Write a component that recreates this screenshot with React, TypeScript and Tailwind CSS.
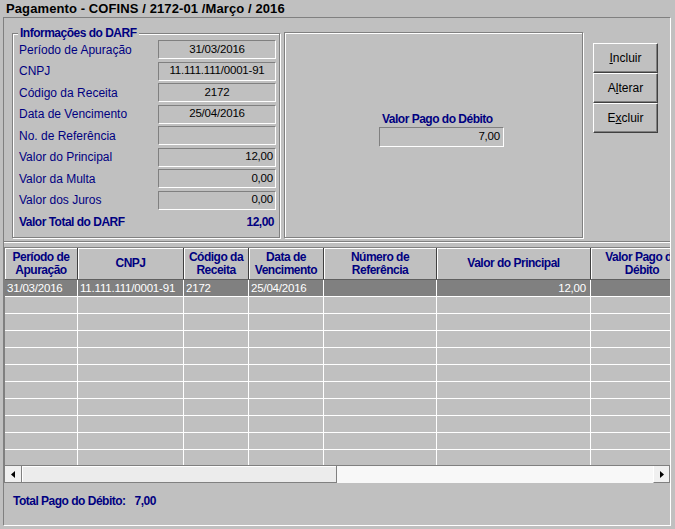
import React from "react";

const labels = [
  { label: "Período de Apuração", value: "31/03/2016", align: "center" },
  { label: "CNPJ", value: "11.111.111/0001-91", align: "center" },
  { label: "Código da Receita", value: "2172", align: "center" },
  { label: "Data de Vencimento", value: "25/04/2016", align: "center" },
  { label: "No. de Referência", value: "", align: "right" },
  { label: "Valor do Principal", value: "12,00", align: "right" },
  { label: "Valor da Multa", value: "0,00", align: "right" },
  { label: "Valor dos Juros", value: "0,00", align: "right" },
];

const cols = [
  { w: 73, head: ["Período de", "Apuração"] },
  { w: 106, head: ["CNPJ"] },
  { w: 65, head: ["Código da", "Receita"] },
  { w: 75, head: ["Data de", "Vencimento"] },
  { w: 113, head: ["Número de", "Referência"] },
  { w: 154, head: ["Valor do Principal"] },
  { w: 103, head: ["Valor Pago do", "Débito"] },
];

const firstRow = ["31/03/2016", "11.111.111/0001-91", "2172", "25/04/2016", "", "12,00", ""];

function Sunken({ children, className }: { children?: React.ReactNode; className: string }) {
  return (
    <div
      className={
        "flex items-center whitespace-nowrap bg-[#c0c0c0] border border-t-[#808080] border-l-[#808080] border-b-white border-r-white text-[11.5px] tracking-[-0.2px] text-black " +
        className
      }
    >
      {children}
    </div>
  );
}

function Button({ children }: { children: React.ReactNode }) {
  return (
    <div className="h-[30px] w-[65px] flex items-center justify-center border border-t-white border-l-white border-b-[#404040] border-r-[#404040] shadow-[inset_-1px_-1px_0_#808080] text-[12px] text-black">
      {children}
    </div>
  );
}

function Arrow({ dir }: { dir: "left" | "right" }) {
  return (
    <svg width="4" height="7" viewBox="0 0 4 7">
      {dir === "left" ? <polygon points="4,0 4,7 0,3.5" fill="#000" /> : <polygon points="0,0 0,7 4,3.5" fill="#000" />}
    </svg>
  );
}

export default function App() {
  return (
    <div className="w-[675px] h-[529px] bg-[#c0c0c0] overflow-hidden font-['Liberation_Sans',Arial,sans-serif]">
      <div className="h-[17px] pl-[6px] text-[13px] font-bold leading-[17px] tracking-[0.1px] text-black">
        Pagamento - COFINS / 2172-01 /Março / 2016
      </div>

      <div className="ml-[3px] w-[668px] h-[509px] border border-t-[#808080] border-l-[#808080] border-r-white border-b-white flex flex-col">
        {/* top section */}
        <div className="h-[224px] flex border-b border-[#808080] shadow-[0_1px_0_white] shrink-0">
          <fieldset className="ml-[8px] mt-[8px] w-[268px] h-[212px] border border-[#808080] shadow-[inset_1px_1px_0_white,1px_1px_0_white]">
            <legend className="ml-[5px] px-[2px] bg-[#c0c0c0] text-[12px] leading-[14px] font-bold tracking-[-0.5px] text-[#000080]">
              Informações do DARF
            </legend>
            <div className="flex flex-col gap-[2.5px] pl-[6px]">
              {labels.map((r) => (
                <div key={r.label} className="flex items-center h-[19px]">
                  <div className="w-[139px] text-[12px] text-[#000080]">{r.label}</div>
                  <Sunken
                    className={
                      "w-[118px] h-[19px] " + (r.align === "center" ? "justify-center" : "justify-end pr-[2px]")
                    }
                  >
                    {r.value}
                  </Sunken>
                </div>
              ))}
              <div className="flex items-center h-[19px] font-bold text-[12px] tracking-[-0.5px] text-[#000080]">
                <div className="w-[139px]">Valor Total do DARF</div>
                <div className="w-[118px] text-right pr-[2px]">12,00</div>
              </div>
            </div>
          </fieldset>

          <div className="ml-[4px] mt-[14px] w-[299px] h-[206px] border border-[#808080] shadow-[inset_1px_1px_0_white,1px_1px_0_white] flex flex-col items-start pl-[94px] pt-[79px]">
            <div className="ml-[3px] text-[12px] leading-[14px] font-bold tracking-[-0.5px] text-[#000080]">
              Valor Pago do Débito
            </div>
            <Sunken className="mt-[1px] w-[125px] h-[20px] justify-end pr-[3px]">7,00</Sunken>
          </div>

          <div className="ml-[10px] mt-[25px] flex flex-col">
            <Button>
              <span className="underline">I</span>ncluir
            </Button>
            <Button>
              A<span className="underline">l</span>terar
            </Button>
            <Button>
              E<span className="underline">x</span>cluir
            </Button>
          </div>
        </div>

        {/* grid */}
        <div className="mt-[5px] w-[666px] border-t border-l border-[#808080] overflow-hidden shrink-0">
          <div className="flex h-[32px] border-b border-[#606060] w-max">
            {cols.map((c, i) => (
              <div
                key={i}
                style={{ width: c.w }}
                className="shrink-0 h-full flex flex-col items-center justify-center border-r border-[#404040] shadow-[inset_1px_1px_0_white] text-[12px] leading-[13px] font-bold tracking-[-0.5px] text-[#000080] text-center whitespace-nowrap"
              >
                {c.head.map((h) => (
                  <div key={h}>{h}</div>
                ))}
              </div>
            ))}
          </div>
          <div className="h-[185px] overflow-hidden">
            {Array.from({ length: 11 }).map((_, r) => (
              <div key={r} className={"flex h-[17px] w-max " + (r === 0 ? "bg-[#808080]" : "bg-[#c0c0c0]")}>
                {cols.map((c, i) => (
                  <div
                    key={i}
                    style={{ width: c.w }}
                    className={
                      "shrink-0 h-full border-r border-b border-white text-[11.5px] tracking-[-0.2px] leading-[16px] text-white px-[2px] whitespace-nowrap overflow-hidden " +
                      (i === 5 ? "text-right pr-[4px]" : "text-left")
                    }
                  >
                    {r === 0 ? firstRow[i] : ""}
                  </div>
                ))}
              </div>
            ))}
          </div>
          <div className="h-[18px] flex border-t border-[#808080]">
            <div className="w-[17px] h-full bg-[#f0f0f0] border-r border-b border-[#808080] flex items-center justify-center">
              <Arrow dir="left" />
            </div>
            <div className="w-[315px] h-full bg-[#ececec] border-r border-b border-[#808080] shadow-[inset_1px_1px_0_white]" />
            <div className="flex-1 h-full bg-[#f8f8f8]" />
            <div className="w-[17px] h-full bg-[#f0f0f0] border-l border-white border-r border-b border-r-[#808080] border-b-[#808080] flex items-center justify-center">
              <Arrow dir="right" />
            </div>
          </div>
        </div>

        <div className="mt-[11px] pl-[9px] text-[12px] leading-[14px] font-bold tracking-[-0.5px] text-[#000080] flex">
          <span>Total Pago do Débito:</span>
          <span className="ml-[9px]">7,00</span>
        </div>
      </div>
    </div>
  );
}
